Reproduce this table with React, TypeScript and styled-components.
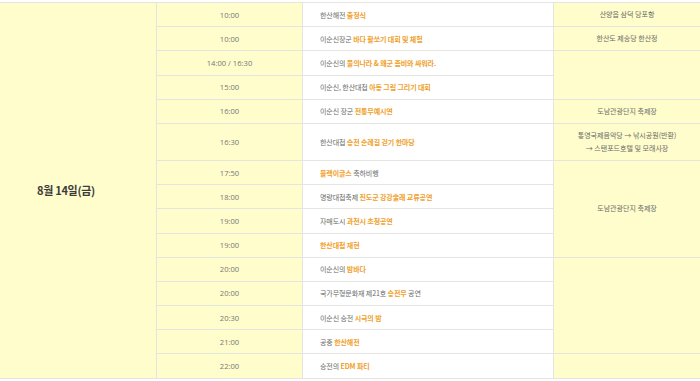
import { Fragment } from 'react';
import styled, { createGlobalStyle } from 'styled-components';

type Part = [string, boolean?];

interface Row {
  time: string;
  event: Part[];
  place?: { lines: string[]; span: number };
}

const ROWS: Row[] = [
  { time: '10:00', event: [['한산해전 '], ['출정식', true]], place: { lines: ['산양읍 삼덕 당포항'], span: 1 } },
  { time: '10:00', event: [['이순신장군 '], ['바다 활쏘기 대회 및 체험', true]], place: { lines: ['한산도 제승당 한산정'], span: 1 } },
  { time: '14:00 / 16:30', event: [['이순신의 '], ['물의나라 & 왜군 좀비와 싸워라', true], ['.']], place: { lines: [], span: 2 } },
  { time: '15:00', event: [['이순신, 한산대첩 '], ['아동 그림 그리기 대회', true]] },
  { time: '16:00', event: [['이순신 장군 '], ['전통무예시연', true]], place: { lines: ['도남관광단지 축제장'], span: 1 } },
  {
    time: '16:30',
    event: [['한산대첩 '], ['승전 순례길 걷기 한마당', true]],
    place: { lines: ['통영국제음악당 → 낚시공원(반환)', '→ 스탠포드호텔 및 모래사장'], span: 1 },
  },
  { time: '17:50', event: [['블랙이글스', true], [' 축하비행']], place: { lines: ['도남관광단지 축제장'], span: 4 } },
  { time: '18:00', event: [['명량대첩축제 '], ['진도군 강강술래 교류공연', true]] },
  { time: '19:00', event: [['자매도시 '], ['과천시 초청공연', true]] },
  { time: '19:00', event: [['한산대첩 재현', true]] },
  { time: '20:00', event: [['이순신의 '], ['밤바다', true]], place: { lines: [], span: 4 } },
  { time: '20:00', event: [['국가무형문화재 제21호 '], ['승전무', true], [' 공연']] },
  { time: '20:30', event: [['이순신 승전 '], ['시극의 밤', true]] },
  { time: '21:00', event: [['공중 '], ['한산해전', true]] },
  { time: '22:00', event: [['승전의 '], ['EDM 파티', true]], place: { lines: [], span: 1 } },
];

const GlobalStyle = createGlobalStyle`
  body {
    margin: 0;
    background: #fff;
    font-family: "Noto Sans CJK KR", "Noto Sans", sans-serif;
  }
`;

const Wrap = styled.div`
  padding-top: 2px;
  width: 700px;
`;

const Sheet = styled.div`
  display: grid;
  grid-template-columns: 156px 145px 250px 1fr;
  grid-template-rows: repeat(5, 23.2px) 36px repeat(9, 23.2px);
  gap: 1px;
  background: #e4e4e0;
  border-top: 1px solid #e4e4e0;
  border-bottom: 1px solid #e4e4e0;
`;

const DayCell = styled.div`
  grid-column: 1;
  grid-row: 1 / -1;
  background: #fffdcb;
  display: flex;
  align-items: center;
  justify-content: center;
  padding-right: 24px;
  font-size: 11px;
  font-weight: 700;
  color: #3c3c3c;
  letter-spacing: -0.3px;
`;

const TimeCell = styled.div<{ $row: number }>`
  grid-column: 2;
  grid-row: ${(p) => p.$row};
  background: #fffdcb;
  display: flex;
  align-items: center;
  justify-content: center;
  font-family: "Open Sans", "Noto Sans", sans-serif;
  font-size: 7.6px;
  color: #777;
`;

const EventCell = styled.div<{ $row: number }>`
  grid-column: 3;
  grid-row: ${(p) => p.$row};
  background: #fff;
  display: flex;
  align-items: center;
  padding-left: 17px;
  font-size: 7px;
  color: #6a6a6a;
  white-space: pre;
  letter-spacing: -0.1px;
`;

const EventText = styled.span`
  display: inline;
`;

const Hl = styled.span`
  color: #f0a02a;
  font-weight: 700;
`;

const PlaceCell = styled.div<{ $row: number; $span: number }>`
  grid-column: 4;
  grid-row: ${(p) => p.$row} / span ${(p) => p.$span};
  background: #fffdcb;
  display: flex;
  flex-direction: column;
  align-items: center;
  justify-content: center;
  font-size: 7px;
  line-height: 13px;
  color: #6a6a6a;
`;

export default function App() {
  return (
    <Wrap>
      <GlobalStyle />
      <Sheet>
        <DayCell>8월 14일(금)</DayCell>
        {ROWS.map((r, i) => (
          <Fragment key={i}>
            <TimeCell $row={i + 1}>{r.time}</TimeCell>
            <EventCell $row={i + 1}>
              <EventText>
                {r.event.map(([text, hl], j) => (hl ? <Hl key={j}>{text}</Hl> : <span key={j}>{text}</span>))}
              </EventText>
            </EventCell>
            {r.place && (
              <PlaceCell $row={i + 1} $span={r.place.span}>
                {r.place.lines.map((l, j) => <span key={j}>{l}</span>)}
              </PlaceCell>
            )}
          </Fragment>
        ))}
      </Sheet>
    </Wrap>
  );
}
